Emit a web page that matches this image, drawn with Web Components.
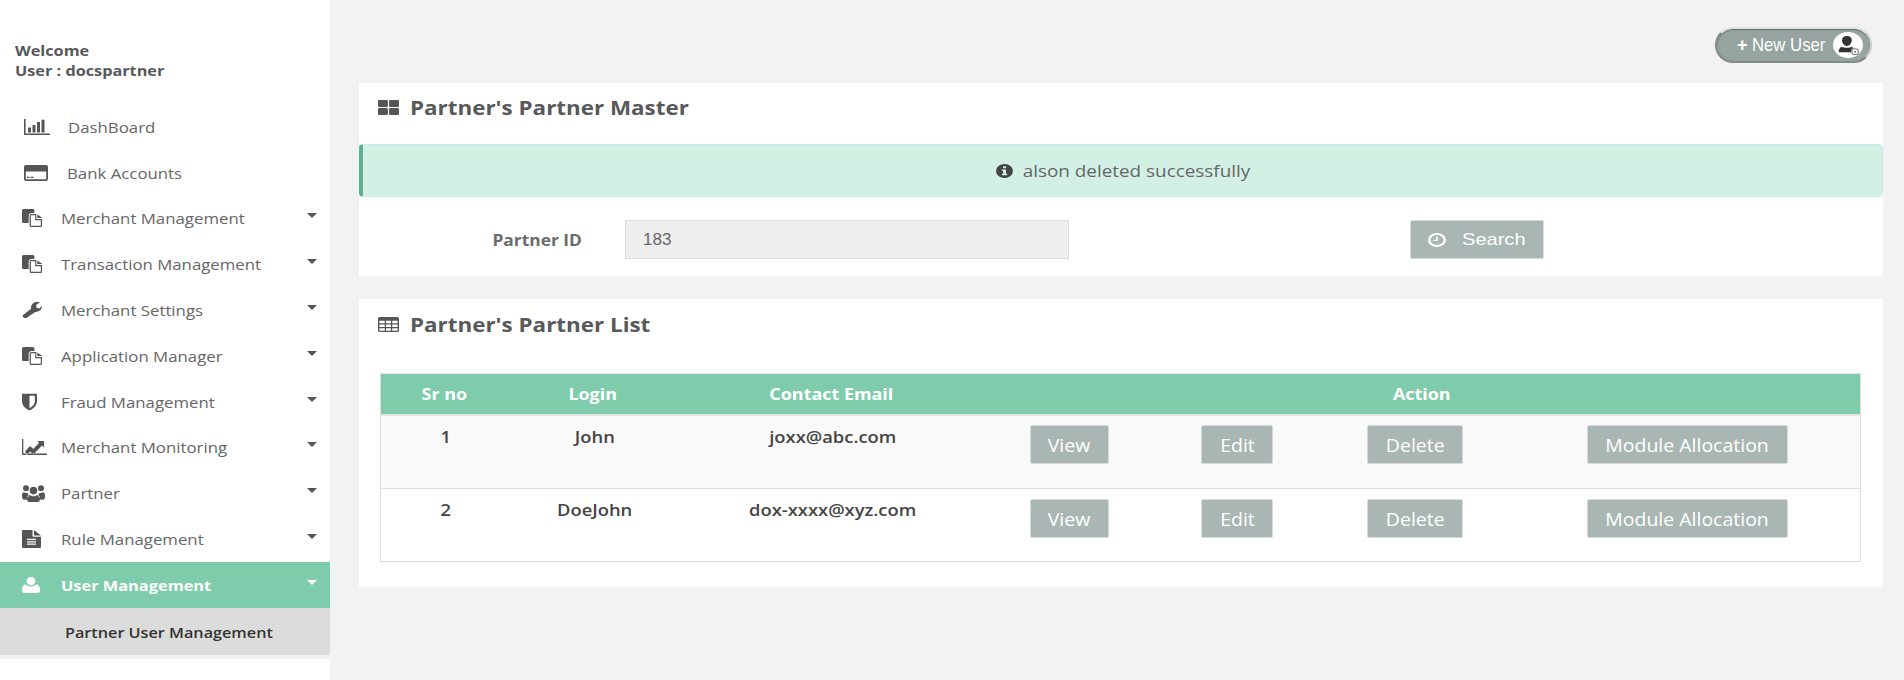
<!DOCTYPE html>
<html>
<head>
<meta charset="utf-8">
<title>Partner's Partner Master</title>
<style>
  html, body { margin: 0; height: 100%; }
  body { font-family: "Open Sans", sans-serif; color: #58595b; background: #f2f2f2; overflow: hidden; }
</style>
</head>
<body>
<app-shell>
  <side-bar slot="side" user="docspartner">
    <nav-item icon="bar" label="DashBoard" indent="68"></nav-item>
    <nav-item icon="card" label="Bank Accounts" indent="67"></nav-item>
    <nav-item icon="files" label="Merchant Management" caret></nav-item>
    <nav-item icon="files" label="Transaction Management" caret></nav-item>
    <nav-item icon="wrench" label="Merchant Settings" caret></nav-item>
    <nav-item icon="files" label="Application Manager" caret></nav-item>
    <nav-item icon="shield" label="Fraud Management" caret></nav-item>
    <nav-item icon="line" label="Merchant Monitoring" caret></nav-item>
    <nav-item icon="group" label="Partner" caret></nav-item>
    <nav-item icon="file" label="Rule Management" caret></nav-item>
    <nav-item icon="user" label="User Management" caret active></nav-item>
    <nav-item label="Partner User Management" indent="65" sub></nav-item>
  </side-bar>

  <new-user-button></new-user-button>

  <content-panel icon="grid" heading="Partner's Partner Master" style="--head-pad:2px">
    <flash-alert>alson deleted successfully</flash-alert>
    <search-form label="Partner ID" value="183"></search-form>
  </content-panel>

  <content-panel icon="table" heading="Partner's Partner List" style="margin-top:23px">
    <partner-table></partner-table>
  </content-panel>
</app-shell>

<script>
// the original screenshot is stretched sideways, so text goes through this class
const WIDE = `.wide { display: inline-block; white-space: nowrap; transform: scaleX(var(--sx, 1.12)); transform-origin: var(--so, center); }`;

// hand drawn to follow the font-awesome 4 shapes used by the original page
const ICONS = {
  bar: { box: '0 0 26 16', d: 'M0 0h1.600v14.400H26V16H0zM4 8.500h3v4.900H4zM8.500 6h3v7.400h-3zM13 3h3v10.400h-3zM17.500 .8h3v12.600h-3z' },
  card: { box: '0 0 24 16', d: 'M2 0h20a2 2 0 0 1 2 2v12a2 2 0 0 1-2 2H2a2 2 0 0 1-2-2V2a2 2 0 0 1 2-2zM1.800 6.500v7.700h20.400V6.500zM3 11.800h2.500v1.200H3zM6.500 11.800h3v1.200h-3z' },
  files: { box: '0 0 22 18', d: 'M0 1.500A1.500 1.500 0 0 1 1.500 0h10A1.500 1.500 0 0 1 13 1.500V4H9.500A2.500 2.500 0 0 0 7 6.500V14H1.500A1.500 1.500 0 0 1 0 12.500zM9.500 5H15v5h6v6.500a1.500 1.500 0 0 1-1.500 1.500h-10A1.500 1.500 0 0 1 8 16.500v-10A1.500 1.500 0 0 1 9.500 5zM9.300 6.300v10.400h10.400v-5.400h-5.900V6.300zM16 5.400L21.500 9H16z' },
  wrench: { box: '0 0 20 18', d: 'M.8 14.600L9 7.800C8.400 4 11.300.2 15.500.2c1 0 1.800.2 2.400.5L14 3.600l.6 2.900 2.700.8L20 4.400c.4 3.900-2.900 7-6.800 6.700L5.200 17c-1.600 1.700-5.700-.6-4.400-2.400z' },
  shield: { box: '0 0 15 17', d: 'M.7 0h13.600c.4 0 .7.300.7.700v7.300c0 4.500-4.500 7.600-7.500 9C4.500 15.600 0 12.500 0 8V.7C0 .3.300 0 .7 0zM7.500 2.200v12.500c2.300-1.300 5.300-3.700 5.300-6.700V2.200z' },
  line: { box: '0 0 25 16', d: 'M0 0h1.300v14.600H25V16H0zM3.200 12.200L8 7l3.300 3 5.800-6.300-2-1.700H22v6.500l-2-2-8.600 8.900-3.300-3-3.700 3.800z' },
  group: { box: '0 0 23 18', d: 'M4 1.200a3 3 0 1 1 0 6 3 3 0 0 1 0-6zM19 1.200a3 3 0 1 1 0 6 3 3 0 0 1 0-6zM11.500 2.800a3.800 3.800 0 1 1 0 7.600 3.800 3.800 0 0 1 0-7.600zM0 11.500C0 9.300.8 8.300 2 8.300c.7.600 2.200 1.100 3.600.6.400 1.300 1 2 2 2.800-2 .8-2.800 2.300-2.800 4H2c-1.200 0-2-1-2-4.200zM23 11.500c0-2.200-.8-3.200-2-3.200-.7.600-2.200 1.100-3.600.6-.4 1.300-1 2-2 2.800 2 .8 2.800 2.300 2.800 4H21c1.200 0 2-1 2-4.200zM7.800 11c1 .8 2.300 1.300 3.700 1.300s2.700-.5 3.700-1.300c1.600 0 2.800 1.200 2.800 4 0 1.800-1 3-2.400 3H7.400C6 18 5 16.800 5 15c0-2.800 1.200-4 2.800-4z' },
  file: { box: '0 0 19 18', d: 'M1 0h9.500v5.700a1 1 0 0 0 1 1H19v10.300a1 1 0 0 1-1 1H1a1 1 0 0 1-1-1V1a1 1 0 0 1 1-1zM12 0l7 5.400h-7zM5 8.800v1.200h9V8.800zM5 11.200v1.200h9v-1.200zM5 13.600v1.200h9v-1.200z' },
  user: { box: '0 0 18 17', d: 'M9 0a4.400 4.400 0 1 1 0 8.800A4.400 4.400 0 0 1 9 0zM3.700 8c1.300 1.300 3.300 2 5.300 2s4-.7 5.300-2C16.800 8 18 10.500 18 14c0 2-1.300 3-2.800 3H2.800C1.300 17 0 16 0 14c0-3.500 1.200-6 3.700-6z' },
  grid: { box: '0 0 18 15', d: 'M1 0h6.500a1 1 0 0 1 1 1v5a1 1 0 0 1-1 1H1a1 1 0 0 1-1-1V1a1 1 0 0 1 1-1zM10.500 0H17a1 1 0 0 1 1 1v5a1 1 0 0 1-1 1h-6.500a1 1 0 0 1-1-1V1a1 1 0 0 1 1-1zM1 8h6.500a1 1 0 0 1 1 1v5a1 1 0 0 1-1 1H1a1 1 0 0 1-1-1V9a1 1 0 0 1 1-1zM10.500 8H17a1 1 0 0 1 1 1v5a1 1 0 0 1-1 1h-6.500a1 1 0 0 1-1-1V9a1 1 0 0 1 1-1z' },
  table: { box: '0 0 18 14', d: 'M1.500 0h15A1.500 1.500 0 0 1 18 1.500v11a1.500 1.500 0 0 1-1.500 1.500h-15A1.500 1.500 0 0 1 0 12.500v-11A1.500 1.500 0 0 1 1.500 0zM1.200 3.500v2.400h4.600V3.500zM6.900 3.500v2.400h4.200V3.500zM12.200 3.500v2.400h4.600V3.500zM1.200 7v2.400h4.600V7zM6.900 7v2.400h4.200V7zM12.200 7v2.400h4.600V7zM1.200 10.500v2.300h4.600v-2.300zM6.900 10.500v2.300h4.200v-2.300zM12.200 10.500v2.300h4.600v-2.300z' },
  info: { box: '0 0 16 16', d: 'M8 0a8 8 0 1 1 0 16A8 8 0 0 1 8 0zM6.700 2.600v2.300h2.700V2.600zM5.500 6.400v1.500h1.200v3.300H5.500v1.600h5.100v-1.600H9.400V6.400z' },
  clock: { box: '0 0 16 16', d: 'M8 0a8 8 0 1 1 0 16A8 8 0 0 1 8 0zM8 2.200a5.800 5.800 0 1 0 0 11.600A5.800 5.800 0 0 0 8 2.200zM7.300 4h1.400v5H4.500V7.600h2.800z' }
};

class ShellIcon extends HTMLElement {
  connectedCallback() {
    const icon = ICONS[this.getAttribute('name')];
    this.attachShadow({ mode: 'open' }).innerHTML = `
      <style>
        :host { display: inline-flex; width: var(--w, 20px); height: var(--h, 16px); }
        svg { width: 100%; height: 100%; fill: currentColor; fill-rule: evenodd; }
      </style>
      <svg viewBox="${icon.box}" preserveAspectRatio="none"><path d="${icon.d}"/></svg>`;
  }
}
customElements.define('shell-icon', ShellIcon);

class AppShell extends HTMLElement {
  constructor() {
    super();
    this.attachShadow({ mode: 'open' }).innerHTML = `
      <style>
        :host { display: flex; height: 680px; }
        main { flex: 1; min-width: 0; padding: 27px 21px 0 29px; box-sizing: border-box; }
      </style>
      <slot name="side"></slot>
      <main><slot></slot></main>`;
  }
}
customElements.define('app-shell', AppShell);

class SideBar extends HTMLElement {
  connectedCallback() {
    this.attachShadow({ mode: 'open' }).innerHTML = `
      <style>
        ${WIDE}
        :host { display: block; width: 330px; flex: none; background: #fff; box-sizing: border-box; padding-top: 41px; --so: left; }
        .who { padding-left: 15px; font-size: 14.500px; font-weight: 700; line-height: 20px; color: #58595b; height: 63px; }
        .end { height: 4px; background: #f2f2f2; }
      </style>
      <div class="who"><span class="wide">Welcome</span><br><span class="wide">User : ${this.getAttribute('user')}</span></div>
      <slot></slot>
      <div class="end"></div>`;
  }
}
customElements.define('side-bar', SideBar);

const ICON_SIZES = {
  bar: [26, 16, 24], card: [24, 16, 24], files: [21, 18, 22], wrench: [20, 17, 22], shield: [15, 17, 22],
  line: [25, 16, 22], group: [23, 18, 22], file: [19, 18, 22], user: [18, 16, 22]
};

class NavItem extends HTMLElement {
  connectedCallback() {
    const name = this.getAttribute('icon');
    const indent = this.getAttribute('indent') || 61;
    const size = ICON_SIZES[name];
    const iconHtml = name ? `<shell-icon name="${name}" style="--w:${size[0]}px;--h:${size[1]}px;left:${size[2]}px"></shell-icon>` : '';
    this.attachShadow({ mode: 'open' }).innerHTML = `
      <style>
        ${WIDE}
        :host { display: flex; align-items: center; height: 45.800px; position: relative; font-size: 15px; color: #666; padding-left: ${indent}px; }
        :host([active]) { height: 46.400px; background: #7fccac; color: #fff; font-weight: 700; --sx: 1.09; }
        :host([sub]) { height: 46.400px; background: #dcdcdc; color: #333; font-weight: 600; --sx: 1.08; }
        shell-icon { position: absolute; top: 50%; transform: translateY(-50%); color: #555; }
        :host([active]) shell-icon { color: #fff; }
        .caret { position: absolute; left: 307px; top: 50%; margin-top: -5px; border: 5.500px solid transparent; border-top-color: #555; border-bottom: 0; }
        :host([active]) .caret { border-top-color: #fff; }
      </style>
      ${iconHtml}
      <span class="wide">${this.getAttribute('label')}</span>
      ${this.hasAttribute('caret') ? '<i class="caret"></i>' : ''}`;
  }
}
customElements.define('nav-item', NavItem);

class NewUserButton extends HTMLElement {
  constructor() {
    super();
    this.attachShadow({ mode: 'open' }).innerHTML = `
      <style>
        :host { display: flex; justify-content: flex-end; height: 56px; padding-right: 11px; }
        .pill { width: 157px; height: 36px; box-sizing: border-box; border-radius: 18px; background: #96a3a1; border: 2px solid #7f8b89; border-top-color: #dfe4e3; border-right-color: #c8cfce; box-shadow: 0 1px 1px #666 inset; display: flex; align-items: center; color: #fff; font: 19px "Liberation Sans", sans-serif; position: relative; }
        .plus { margin-left: 20px; font-weight: 700; font-size: 18px; }
        .txt { display: inline-block; margin-left: 4px; transform: scaleX(.88); transform-origin: left center; white-space: nowrap; }
        .face { position: absolute; right: 7px; top: 3px; width: 30px; height: 26px; border-radius: 50%; background: #fff; display: flex; align-items: center; justify-content: center; }
        svg { width: 24px; height: 21px; fill: #333; }
      </style>
      <div class="pill">
        <span class="plus">+</span><span class="txt">New User</span>
        <span class="face">
          <svg viewBox="0 0 22 22" preserveAspectRatio="none">
            <path d="M10 1c3 0 4.500 2 4.500 4.500S12.500 11.500 10 11.500 5.500 8 5.500 5.500 7 1 10 1zM5 12.500c1.500.5 3 .8 5 .8s3.500-.3 4.500-.8c.5 0 1.500.7 1.500 1.500-2 .5-2.500 2-2 4H2.500c0-3 1-5 2.500-5.500z"/>
            <circle cx="17.500" cy="17.500" r="3" fill="#fff" stroke="#777" stroke-width="1"/><circle cx="17.500" cy="17.500" r="1" fill="#777"/>
          </svg>
        </span>
      </div>`;
  }
}
customElements.define('new-user-button', NewUserButton);

class ContentPanel extends HTMLElement {
  connectedCallback() {
    this.attachShadow({ mode: 'open' }).innerHTML = `
      <style>
        ${WIDE}
        :host { display: flow-root; background: #fff; }
        header { display: flex; align-items: center; box-sizing: border-box; height: 50px; padding: 0 0 var(--head-pad, 0) 19px; font-size: 20px; font-weight: 700; color: #58595b; --so: left; }
        shell-icon { --w: 21px; --h: 15px; margin-right: 11px; color: #555; }
      </style>
      <header><shell-icon name="${this.getAttribute('icon')}"></shell-icon><span class="wide">${this.getAttribute('heading')}</span></header>
      <slot></slot>`;
  }
}
customElements.define('content-panel', ContentPanel);

class FlashAlert extends HTMLElement {
  constructor() {
    super();
    this.attachShadow({ mode: 'open' }).innerHTML = `
      <style>
        ${WIDE}
        :host { display: flex; align-items: center; justify-content: center; margin-top: 11px; height: 53px; box-sizing: border-box; padding-right: 10px; background: #d2f1e4; border: 1px solid #c5ecec; border-left: 4px solid #5bae8e; border-radius: 4px; font-size: 17px; color: #666; --sx: 1.11; }
        shell-icon { --w: 17px; --h: 14px; margin-right: 21px; color: #444; }
      </style>
      <shell-icon name="info"></shell-icon><span class="wide"><slot></slot></span>`;
  }
}
customElements.define('flash-alert', FlashAlert);

class GrayButton extends HTMLElement {
  constructor() {
    super();
    this.attachShadow({ mode: 'open' }).innerHTML = `
      <style>
        ${WIDE}
        :host { display: inline-flex; align-items: center; justify-content: var(--justify, center); height: 39px; box-sizing: border-box; background: #aab6b4; border: 1px solid #d5dbda; border-radius: 2px; color: #fff; font-size: 17.400px; }
      </style>
      <slot name="icon"></slot><span class="wide"><slot></slot></span>`;
  }
}
customElements.define('gray-button', GrayButton);

class SearchForm extends HTMLElement {
  connectedCallback() {
    this.attachShadow({ mode: 'open' }).innerHTML = `
      <style>
        ${WIDE}
        :host { display: flex; align-items: center; padding-top: 23px; padding-bottom: 17px; }
        label { width: 223px; text-align: right; font-size: 15.500px; font-weight: 700; color: #6b6b6b; --so: right; }
        input { width: 444px; height: 39px; box-sizing: border-box; margin: 0 341px 0 43px; padding: 0 17px; background: #eee; border: 1px solid #ddd; color: #666; font: 17px "Liberation Sans", sans-serif; }
        gray-button { width: 134px; padding-left: 17px; font-family: "Liberation Sans", sans-serif; font-size: 17px; --justify: flex-start; --so: left; --sx: 1.18; }
        shell-icon { --w: 18px; --h: 14px; margin-right: 16px; }
      </style>
      <label><span class="wide">${this.getAttribute('label')}</span></label>
      <input value="${this.getAttribute('value')}" disabled>
      <gray-button><shell-icon slot="icon" name="clock"></shell-icon>Search</gray-button>`;
  }
}
customElements.define('search-form', SearchForm);

const PARTNERS = [
  { sr: 1, login: 'John', email: 'joxx@abc.com' },
  { sr: 2, login: 'DoeJohn', email: 'dox-xxxx@xyz.com' }
];

class PartnerTable extends HTMLElement {
  connectedCallback() {
    const actions = `
      <span class="act"><gray-button style="width:79px">View</gray-button></span>
      <span class="act"><gray-button style="width:72px">Edit</gray-button></span>
      <span class="act"><gray-button style="width:96px">Delete</gray-button></span>
      <span class="act last"><gray-button style="width:201px">Module Allocation</gray-button></span>`;
    const rows = PARTNERS.map((p) => `
      <div class="row">
        <span><span class="wide">${p.sr}</span></span><span><span class="wide">${p.login}</span></span><span><span class="wide">${p.email}</span></span>
        <div class="actions">${actions}</div>
      </div>`).join('');
    this.attachShadow({ mode: 'open' }).innerHTML = `
      <style>
        ${WIDE}
        :host { display: block; margin: 24px 22px 25px 21px; border: 1px solid #ddd; border-top-color: #e5e5e5; font-size: 16.400px; }
        .head, .row { display: grid; text-align: center; }
        .head { grid-template-columns: 126px 172px 304px 1fr; height: 40px; align-items: center; background: #7fccac; color: #fff; font-weight: 700; font-size: 16px; border-bottom: 2px solid #e5e5e5; }
        .row { grid-template-columns: 129px 169px 308px 1fr; height: 72px; padding-top: 10px; box-sizing: border-box; font-weight: 600; color: #444; line-height: 21px; }
        .row + .row { border-top: 1px solid #ddd; height: 73px; }
        .row:nth-child(3) { background: #f9f9f9; }
        .actions { display: grid; grid-template-columns: 168px 168px 188px 1fr; margin: -1px 0 0 -2px; font-weight: 400; line-height: normal; }
        .row + .row .actions { margin-top: 0; }
        .act { display: flex; justify-content: center; }
        .last { padding-left: 6px; }
      </style>
      <div class="head"><span><span class="wide">Sr no</span></span><span><span class="wide">Login</span></span><span><span class="wide">Contact Email</span></span><span><span class="wide">Action</span></span></div>
      ${rows}`;
  }
}
customElements.define('partner-table', PartnerTable);
</script>
</body>
</html>
